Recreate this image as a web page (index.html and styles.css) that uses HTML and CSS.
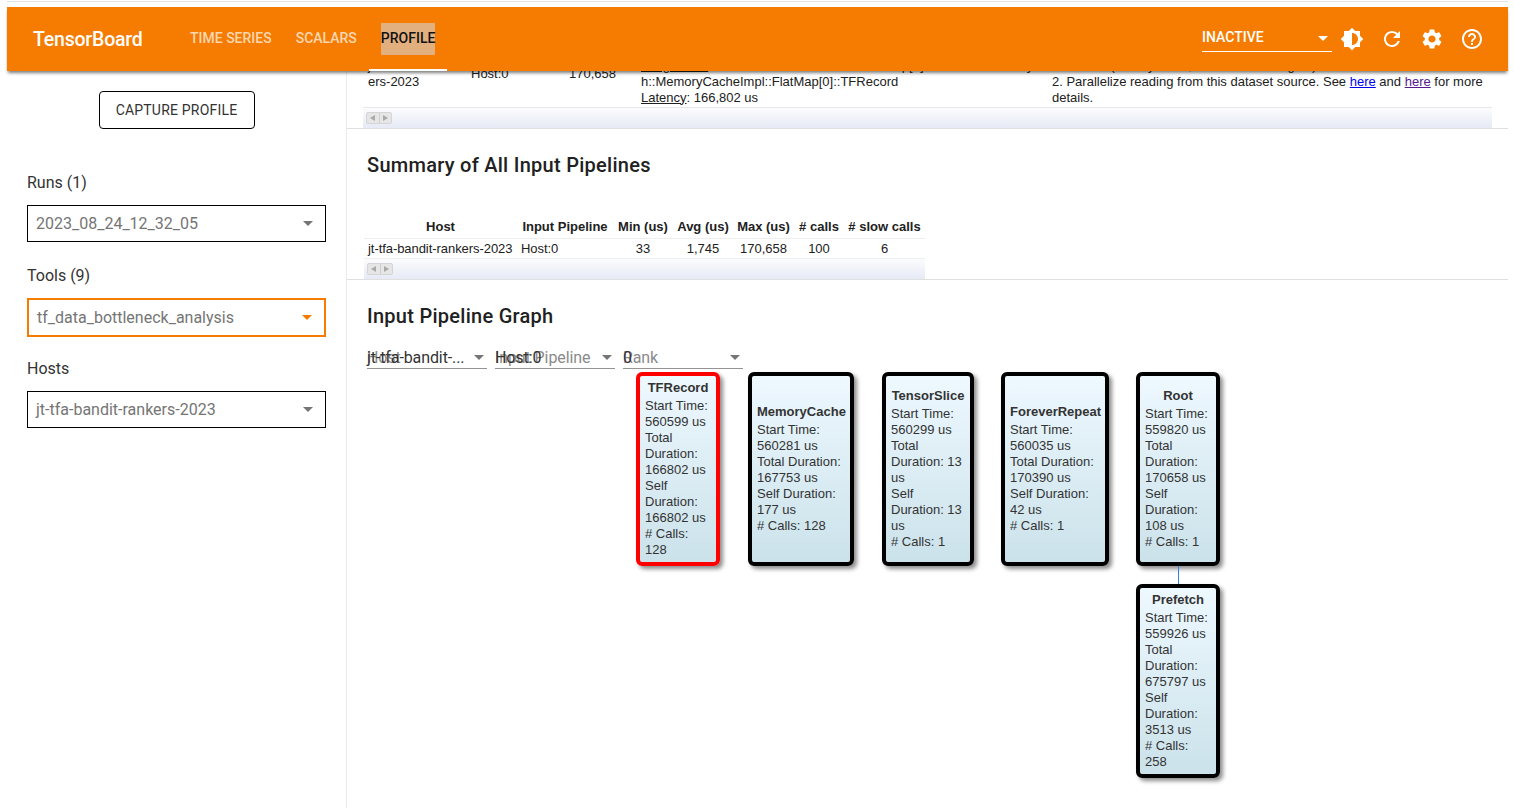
FILE: index.html
```html
<!DOCTYPE html>
<html lang="en">
<head>
    <meta charset="UTF-8">
    <title>TensorBoard</title>
    <link rel="stylesheet" href="styles.css">
</head>
<body>
<div class="page">
    <header class="toolbar">
        <div class="brand">TensorBoard</div>
        <nav class="tabs">
            <a class="tab">TIME SERIES</a>
            <a class="tab">SCALARS</a>
            <a class="tab tab-active"><span class="tab-label">PROFILE</span></a>
        </nav>
        <div class="toolbar-right">
            <div class="reload-select">
                <span>INACTIVE</span>
                <i class="arrow arrow-white"></i>
            </div>
            <button class="icon-btn">
                <svg viewBox="0 0 24 24"><path d="M20 15.31L23.31 12 20 8.69V4h-4.69L12 .69 8.69 4H4v4.69L.69 12 4 15.31V20h4.69L12 23.31 15.31 20H20v-4.69zM12 18V6c3.31 0 6 2.69 6 6s-2.69 6-6 6z"/></svg>
            </button>
            <button class="icon-btn">
                <svg viewBox="0 0 24 24"><path d="M17.65 6.35C16.2 4.9 14.21 4 12 4c-4.42 0-7.99 3.58-7.99 8s3.57 8 7.99 8c3.73 0 6.84-2.55 7.73-6h-2.08c-.82 2.33-3.04 4-5.65 4-3.31 0-6-2.69-6-6s2.69-6 6-6c1.66 0 3.14.69 4.22 1.78L13 11h7V4l-2.35 2.35z"/></svg>
            </button>
            <button class="icon-btn">
                <svg viewBox="0 0 24 24"><path d="M19.14 12.94c.04-.3.06-.61.06-.94 0-.32-.02-.64-.07-.94l2.03-1.58c.18-.14.23-.41.12-.61l-1.92-3.32c-.12-.22-.37-.29-.59-.22l-2.39.96c-.5-.38-1.03-.7-1.62-.94l-.36-2.54c-.04-.24-.24-.41-.48-.41h-3.84c-.24 0-.43.17-.47.41l-.36 2.54c-.59.24-1.13.57-1.62.94l-2.39-.96c-.22-.08-.47 0-.59.22L2.74 8.87c-.12.21-.08.47.12.61l2.03 1.58c-.05.3-.09.63-.09.94s.02.64.07.94l-2.03 1.58c-.18.14-.23.41-.12.61l1.92 3.32c.12.22.37.29.59.22l2.39-.96c.5.38 1.03.7 1.62.94l.36 2.54c.05.24.24.41.48.41h3.84c.24 0 .44-.17.47-.41l.36-2.54c.59-.24 1.13-.56 1.62-.94l2.39.96c.22.08.47 0 .59-.22l1.92-3.32c.12-.22.07-.47-.12-.61l-2.01-1.58zM12 15.6c-1.98 0-3.6-1.62-3.6-3.6s1.62-3.6 3.6-3.6 3.6 1.62 3.6 3.6-1.62 3.6-3.6 3.6z"/></svg>
            </button>
            <button class="icon-btn">
                <svg viewBox="0 0 24 24"><path d="M11 18h2v-2h-2v2zm1-16C6.48 2 2 6.48 2 12s4.48 10 10 10 10-4.48 10-10S17.52 2 12 2zm0 18c-4.41 0-8-3.59-8-8s3.59-8 8-8 8 3.59 8 8-3.59 8-8 8zm0-14c-2.21 0-4 1.79-4 4h2c0-1.1.9-2 2-2s2 .9 2 2c0 2-3 1.75-3 5h2c0-2.25 3-2.5 3-5 0-2.21-1.79-4-4-4z"/></svg>
            </button>
        </div>
    </header>

    <div class="content">
        <aside class="sidebar">
            <button class="capture-btn">CAPTURE PROFILE</button>
            <div class="field-label field-runs">Runs (1)</div>
            <div class="side-select"><span>2023_08_24_12_32_05</span><i class="arrow"></i></div>
            <div class="field-label">Tools (9)</div>
            <div class="side-select side-select-focus"><span>tf_data_bottleneck_analysis</span><i class="arrow arrow-orange"></i></div>
            <div class="field-label field-hosts">Hosts</div>
            <div class="side-select"><span>jt-tfa-bandit-rankers-2023</span><i class="arrow"></i></div>
        </aside>

        <main class="main">
            <div class="scrolled">
                <section class="section section-bottleneck">
                    <div class="wide-table">
                        <div class="bottleneck-row">
                            <div class="col-host">jt-tfa-bandit-rank<br>ers-2023</div>
                            <div class="col-pipe">Host:0</div>
                            <div class="col-max">170,658</div>
                            <div class="col-name"><u>Name</u>: TFRecord<br><u>Long Name</u>: Iterator::Model::Prefetch::FlatMap[0]::Prefetch::MemoryCac<br>h::MemoryCacheImpl::FlatMap[0]::TFRecord<br><u>Latency</u>: 166,802 us</div>
                            <div class="col-hint">1. Check the locality of a host and input data. Ideally, they should be in the<br>same cell (or very close, like the same region).<br>2. Parallelize reading from this dataset source. See <a class="link" href="#">here</a> and <a class="link link-visited" href="#">here</a> for more details.</div>
                        </div>
                        <div class="scrollbar"><span class="scroll-btns"><b class="tri-left"></b><b class="tri-right"></b></span></div>
                    </div>
                </section>

                <section class="section section-summary">
                    <h2>Summary of All Input Pipelines</h2>
                    <div class="summary-wrap">
                        <table class="summary-table">
                            <thead>
                                <tr>
                                    <th>Host</th><th>Input Pipeline</th><th>Min (us)</th><th>Avg (us)</th><th>Max (us)</th><th># calls</th><th># slow calls</th>
                                </tr>
                            </thead>
                            <tbody>
                                <tr>
                                    <td class="left">jt-tfa-bandit-rankers-2023</td><td class="left">Host:0</td><td>33</td><td>1,745</td><td>170,658</td><td>100</td><td>6</td>
                                </tr>
                            </tbody>
                        </table>
                        <div class="scrollbar"><span class="scroll-btns"><b class="tri-left"></b><b class="tri-right"></b></span></div>
                    </div>
                </section>

                <section class="section-graph">
                    <h2>Input Pipeline Graph</h2>
                    <div class="graph-selects">
                        <div class="graph-select"><span class="ghost">Host</span><span class="value">jt-tfa-bandit-...</span><i class="arrow"></i></div>
                        <div class="graph-select"><span class="ghost">Input Pipeline</span><span class="value">Host:0</span><i class="arrow"></i></div>
                        <div class="graph-select"><span class="ghost">Rank</span><span class="value">0</span><i class="arrow"></i></div>
                    </div>
                    <div class="graph">
                        <div class="node node-tfrecord node-slow">
                            <div class="node-name">TFRecord</div>
                            <div>Start Time: 560599 us</div><div>Total Duration: 166802 us</div><div>Self Duration: 166802 us</div><div># Calls: 128</div>
                        </div>
                        <div class="node node-memory">
                            <div class="node-name">MemoryCache</div>
                            <div>Start Time: 560281 us</div><div>Total Duration: 167753 us</div><div>Self Duration: 177 us</div><div># Calls: 128</div>
                        </div>
                        <div class="node node-slice">
                            <div class="node-name">TensorSlice</div>
                            <div>Start Time: 560299 us</div><div>Total Duration: 13 us</div><div>Self Duration: 13 us</div><div># Calls: 1</div>
                        </div>
                        <div class="node node-repeat">
                            <div class="node-name">ForeverRepeat</div>
                            <div>Start Time: 560035 us</div><div>Total Duration: 170390 us</div><div>Self Duration: 42 us</div><div># Calls: 1</div>
                        </div>
                        <div class="node node-root">
                            <div class="node-name">Root</div>
                            <div>Start Time: 559820 us</div><div>Total Duration: 170658 us</div><div>Self Duration: 108 us</div><div># Calls: 1</div>
                        </div>
                        <div class="edge"></div>
                        <div class="node node-prefetch">
                            <div class="node-name">Prefetch</div>
                            <div>Start Time: 559926 us</div><div>Total Duration: 675797 us</div><div>Self Duration: 3513 us</div><div># Calls: 258</div>
                        </div>
                    </div>
                </section>
            </div>
        </main>
    </div>
</div>
</body>
</html>
```

FILE: styles.css
```css
html, body {
    margin: 0;
    padding: 0;
    height: 100%;
    overflow: hidden;
    background: #fff;
}
body {
    font-family: Roboto, "Liberation Sans", sans-serif;
    color: #212121;
}
.page {
    margin: 1px 6px 0 7px;
    border-top: 1px solid #e3e3e3;
    padding-top: 5px;
    height: 801px;
    display: flex;
    flex-direction: column;
}

/* Top bar */
.toolbar {
    flex: none;
    height: 64px;
    background-color: #f57c00;
    box-shadow: 0 3px 3px -1px rgba(0, 0, 0, 0.5);
    display: flex;
    align-items: center;
    position: relative;
    z-index: 10;
    color: white;
}
.brand {
    font-size: 19.5px;
    font-weight: 500;
    letter-spacing: -0.2px;
    margin-left: 26px;
    width: 157px;
}
.tabs {
    display: flex;
    align-items: center;
    height: 100%;
}
.tab {
    font-size: 14px;
    font-weight: 500;
    color: rgba(255, 255, 255, 0.7);
    margin-right: 24px;
    padding-bottom: 2px;
}
.tab-active {
    align-self: stretch;
    display: flex;
    align-items: center;
    position: relative;
    padding-bottom: 0;
}
.tab-active::after {
    content: "";
    position: absolute;
    left: -12px;
    right: -12px;
    bottom: 0;
    height: 2px;
    background: white;
}
.tab-label {
    background-color: #e2b07f;
    color: #111;
    height: 32px;
    line-height: 31px;
}
.toolbar-right {
    margin-left: auto;
    margin-right: 16px;
    display: flex;
    align-items: center;
}
.reload-select {
    width: 130px;
    height: 30px;
    border-bottom: 1px solid white;
    box-sizing: border-box;
    font-size: 14px;
    font-weight: 500;
    display: flex;
    justify-content: space-between;
    padding: 7px 4px 0 0;
    position: relative;
    top: -2px;
}
.icon-btn {
    width: 40px;
    height: 40px;
    padding: 8px;
    border: none;
    background: none;
    display: block;
}
.icon-btn svg {
    display: block;
    width: 24px;
    height: 24px;
    fill: white;
}

/* Select arrow */
.arrow {
    display: inline-block;
    width: 0;
    height: 0;
    border-left: 5px solid transparent;
    border-right: 5px solid transparent;
    border-top: 5px solid #757575;
    flex: none;
}
.arrow-white {
    border-top-color: white;
    margin-top: 7px;
}
.arrow-orange {
    border-top-color: #f57c00;
}

.content {
    flex: 1;
    display: flex;
    min-height: 0;
}

/* Sidebar */
.sidebar {
    flex: none;
    width: 299px;
    border-right: 1px solid #ebebeb;
    padding: 20px 20px 0 20px;
}
.capture-btn {
    display: block;
    margin: 0 auto;
    width: 156px;
    height: 38px;
    background: white;
    border: 1px solid #000;
    border-radius: 4px;
    font-family: Roboto, sans-serif;
    font-size: 14px;
    letter-spacing: 0.2px;
    color: #333;
}
.field-label {
    font-size: 16px;
    line-height: 20px;
    margin: 24px 0 12px;
    color: #333;
}
.field-runs {
    margin-top: 44px;
}
.field-hosts {
    margin-top: 22px;
}
.side-select {
    height: 37px;
    box-sizing: border-box;
    border: 1px solid #000;
    padding: 0 12px 0 8px;
    display: flex;
    align-items: center;
    justify-content: space-between;
    font-size: 16px;
    color: #757575;
}
.side-select-focus {
    height: 39px;
    border: 2px solid #f57c00;
}

/* Main column */
.main {
    flex: 1;
    min-width: 0;
    overflow: hidden;
}
.scrolled {
    margin-top: -33px;
}
.section {
    border-bottom: 1px solid #e0e0e0;
    padding-left: 16px;
}
.section h2, .section-graph h2 {
    font-size: 20px;
    font-weight: 500;
    line-height: 24px;
    margin: 0;
    color: #212121;
    letter-spacing: 0.27px;
}
.section-bottleneck {
    height: 90px;
}
.wide-table {
    width: 1129px;
}
.bottleneck-row {
    display: flex;
    align-items: center;
    font-family: "Liberation Sans", Arial, sans-serif;
    font-size: 13px;
    line-height: 16px;
    color: #212121;
    box-sizing: border-box;
    border-bottom: 1px solid #e8e8e8;
    height: 70px;
    padding: 2px 0 0 5px;
}
.col-host { width: 103px; }
.col-pipe { width: 98px; }
.col-max { width: 72px; }
.col-name { width: 411px; white-space: nowrap; overflow: hidden; }
.col-hint { width: 436px; }
.link { color: #0000ee; }
.link-visited { color: #551a8b; }

.scrollbar {
    height: 20px;
    background: linear-gradient(#fcfcfe, #e6eaf5);
    padding: 4px 0 0 3px;
    box-sizing: border-box;
}
.scroll-btns {
    display: flex;
    width: 26px;
    height: 12px;
    background: #e6e6e6;
    border: 1px solid #d5d5d5;
    border-radius: 2px;
    box-sizing: border-box;
}
.scroll-btns b {
    flex: 1;
    display: flex;
    align-items: center;
    justify-content: center;
}
.scroll-btns b:first-child {
    border-right: 1px solid #cfcfcf;
}
.tri-left::before, .tri-right::before {
    content: "";
    border-top: 3px solid transparent;
    border-bottom: 3px solid transparent;
}
.tri-left::before { border-right: 5px solid #aaa; }
.tri-right::before { border-left: 5px solid #aaa; }

/* Summary */
.section-summary {
    height: 150px;
}
.section-summary h2 {
    padding: 24px 0 0 4px;
}
.summary-wrap {
    width: 561px;
    margin: 41px 0 0 1px;
}
.summary-table {
    width: 100%;
    table-layout: fixed;
    border-collapse: collapse;
    font-family: "Liberation Sans", Arial, sans-serif;
    font-size: 13px;
    line-height: 16px;
    color: #212121;
}
.summary-table th {
    font-weight: bold;
    text-align: center;
    padding: 1px 0 3px;
    white-space: nowrap;
    border-bottom: 1px solid #eee;
}
.summary-table th:nth-child(1) { width: 153px; }
.summary-table th:nth-child(2) { width: 96px; }
.summary-table th:nth-child(3) { width: 60px; }
.summary-table th:nth-child(4) { width: 60px; }
.summary-table th:nth-child(5) { width: 61px; }
.summary-table th:nth-child(6) { width: 50px; }
.summary-table td {
    text-align: center;
    padding: 2px 0 1px;
    white-space: nowrap;
    border-bottom: 1px solid #eee;
}
.summary-table td.left {
    text-align: left;
    padding-left: 4px;
    letter-spacing: -0.06px;
}

/* Graph */
.section-graph {
    padding: 24px 0 0 20px;
}
.graph-selects {
    display: flex;
    gap: 8px;
    margin-top: 19px;
}
.graph-select {
    width: 120px;
    height: 22px;
    border-bottom: 1px solid #949494;
    position: relative;
    font-size: 16px;
    line-height: 22px;
    letter-spacing: -0.1px;
    display: flex;
    justify-content: flex-end;
    align-items: center;
    padding-right: 3px;
    box-sizing: border-box;
}
.ghost {
    position: absolute;
    left: 0;
    top: 0;
    color: #8a8a8a;
}
.value {
    position: absolute;
    left: 0;
    top: 0;
    color: #333;
}
.graph {
    position: relative;
    height: 420px;
}
.node {
    position: absolute;
    box-sizing: border-box;
    border: 4px solid #000;
    border-radius: 6px;
    background: linear-gradient(#eef8ff, #cbe2ea);
    box-shadow: 3px 3px 4px rgba(0, 0, 0, 0.45);
    font-family: "Liberation Sans", Arial, sans-serif;
    font-size: 13px;
    line-height: 16px;
    color: #333;
    padding: 0 5px;
    display: flex;
    flex-direction: column;
    justify-content: center;
}
.node-name {
    font-weight: bold;
    text-align: center;
    margin-bottom: 2px;
    white-space: nowrap;
}
.node-slow { border-color: #f00; }
.node-tfrecord { left: 269px; top: 3px; width: 84px; height: 194px; }
.node-memory { left: 381px; top: 3px; width: 106px; height: 194px; }
.node-slice { left: 515px; top: 3px; width: 92px; height: 194px; }
.node-repeat { left: 634px; top: 3px; width: 108px; height: 194px; }
.node-root { left: 769px; top: 3px; width: 84px; height: 194px; }
.node-prefetch { left: 769px; top: 215px; width: 84px; height: 194px; }
.edge {
    position: absolute;
    left: 811px;
    top: 197px;
    width: 1px;
    height: 18px;
    background: #2f80ed;
}
```
